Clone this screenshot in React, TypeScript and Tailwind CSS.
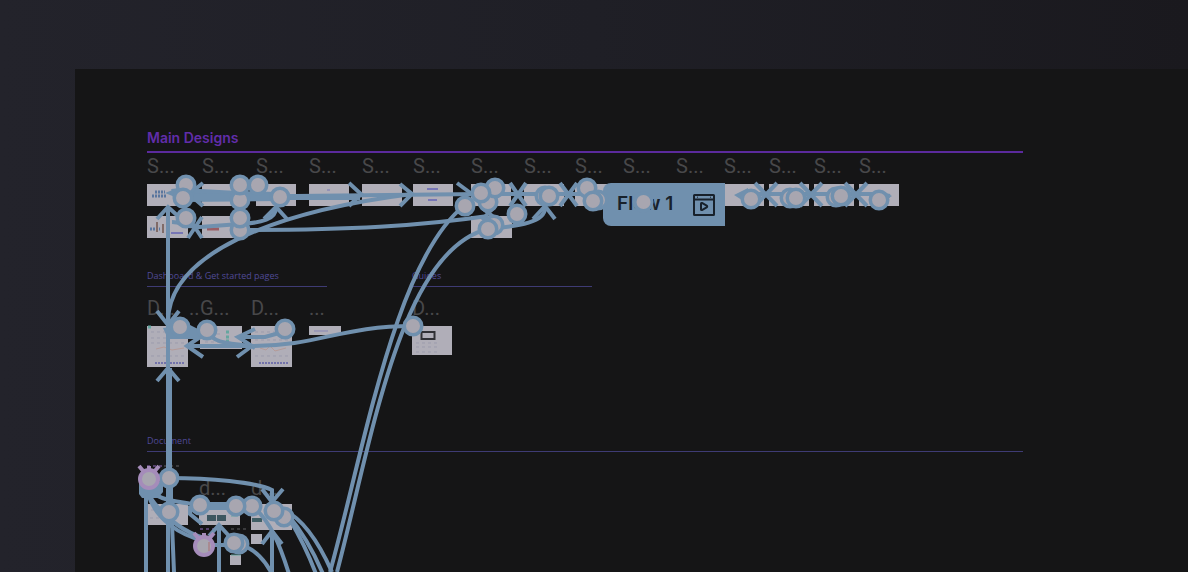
import React from "react";

type Point = [x: number, y: number];

interface FrameItem {
  label?: string;
  slot: string;
  frame?: string;
}

const mainFrames: FrameItem[] = [
  { label: "S...", slot: "w-[55px]", frame: "h-[22px] w-10" },
  { label: "S...", slot: "w-[54px]", frame: "h-[22px] w-10" },
  { label: "S...", slot: "w-[53px]", frame: "h-[22px] w-10" },
  { label: "S...", slot: "w-[53px]", frame: "h-[22px] w-10" },
  { label: "S...", slot: "w-[51px]", frame: "h-[22px] w-10" },
  { label: "S...", slot: "w-[58px]", frame: "h-[22px] w-10" },
  { label: "S...", slot: "w-[53px]", frame: "h-[22px] w-10" },
  { label: "S...", slot: "w-[51px]", frame: "h-[22px] w-10" },
  { label: "S...", slot: "w-[48px]", frame: "h-[22px] w-10" },
  { label: "S...", slot: "w-[53px]", frame: "h-[22px] w-10" },
  { label: "S...", slot: "w-[48px]", frame: "h-[22px] w-10" },
  { label: "S...", slot: "w-[45px]", frame: "h-[22px] w-10" },
  { label: "S...", slot: "w-[45px]", frame: "h-[22px] w-10" },
  { label: "S...", slot: "w-[45px]", frame: "h-[22px] w-10" },
  { label: "S...", slot: "w-[40px]", frame: "h-[22px] w-10" },
];

const dashboardFrames: FrameItem[] = [
  { label: "D...", slot: "w-[42px]", frame: "h-[41px] w-[41px]" },
  { label: "..", slot: "w-[11px]" },
  { label: "G...", slot: "w-[51px]", frame: "h-[23px] w-[42px]" },
  { label: "D...", slot: "w-[58px]", frame: "h-[41px] w-[41px]" },
  { label: "...", slot: "w-[32px]", frame: "h-[9px] w-8" },
];

const guideFrames: FrameItem[] = [
  { label: "D...", slot: "w-[40px]", frame: "h-[29px] w-10" },
];

const connectors = [
  "M168 207 V478",
  "M170 368 V478",
  "M168 322 C168 255 270 212 412 194",
  "M295 196 L480 194",
  "M172 222 C182 222 186 228 200 227 L240 224",
  "M240 230 C350 230 420 226 488 216",
  "M240 224 C262 223 276 219 276 208",
  "M488 229 C520 226 545 222 545 208",
  "M330 572 C364 450 395 260 465 205",
  "M337 572 C372 440 400 250 488 229",
  "M480 194 H600",
  "M740 194 H879 L890 196",
  "M413 326 C340 326 320 346 250 346 H188",
  "M207 330 C212 342 222 343 252 346",
  "M238 337 H265 L290 330",
  "M169 478 C210 478 255 482 272 490 V501",
  "M149 490 C160 501 180 502 200 505",
  "M148 494 C156 520 180 535 204 541",
  "M148 494 C166 522 190 534 204 538",
  "M146 488 V572",
  "M168 478 V572",
  "M171 478 V500 L174 572",
  "M219 526 V572",
  "M204 545 H235",
  "M190 506 V514 L202 524",
  "M272 531 V572",
  "M252 506 C270 520 280 545 289 574",
  "M240 545 C255 548 266 562 272 574",
  "M284 510 C305 520 320 545 332 572",
  "M288 515 C305 535 315 555 323 574",
  "M290 520 C302 540 310 558 316 574",
  "M482 208 L495 218 M495 206 L482 220",
];

const heavyConnectors = [
  "M172 193 C186 190 200 195 280 196",
  "M183 198 L280 197",
  "M168 333 H207",
  "M200 506 H250",
];

const blobs = [
  "M165 193 L180 187 L196 190 L190 203 Z",
  "M139 482 H163 V492 L158 498 H142 L139 494 Z",
  "M734 195 L748 188 V204 Z",
  "M892 196 L880 190 V204 Z",
  "M470 196 L482 186 L504 192 L488 206 Z",
  "M163 328 L188 324 L206 333 V339 H168 Z",
];

const arrowheads = [
  "M203 183 L189 194 L203 206",
  "M188 217 L202 238 M202 217 L188 238",
  "M349 183 L361 194 L349 206",
  "M400 184 L412 194 L400 206",
  "M457 183 L480 200",
  "M157 219 L168 207 L179 217",
  "M264 219 L276 207 L287 219",
  "M533 219 L545 206 L555 219",
  "M510 183 L526 206 M526 183 L510 206",
  "M560 183 L577 206 M577 183 L560 206",
  "M755 183 L777 206 M777 183 L755 206",
  "M800 183 L822 206 M822 183 L800 206",
  "M845 183 L867 206 M867 183 L845 206",
  "M157 311 L168 325 L179 311",
  "M203 335 L187 346 L203 357",
  "M255 329 L238 337 L255 348",
  "M237 357 L252 346",
  "M157 381 L168 368 L179 381",
  "M262 489 L272 502 L283 489",
  "M209 536 L219 525 L230 537",
  "M262 544 L272 531 L282 544",
];

const hotspots: Point[] = [
  [186, 185], [183, 198], [240, 200], [240, 185], [258, 185], [280, 197],
  [186, 218], [240, 230], [240, 218],
  [465, 206], [488, 202], [495, 188], [481, 193], [517, 214], [494, 225], [488, 229],
  [545, 196], [549, 196], [587, 188], [598, 200], [593, 201],
  [751, 199], [790, 198], [796, 198], [836, 197], [841, 196], [879, 200],
  [180, 327], [207, 330], [285, 329], [413, 326],
  [169, 478], [169, 512], [200, 505], [252, 506], [236, 506],
  [284, 517], [274, 511], [239, 544], [234, 543],
];

const looseHotspots: Point[] = [[149, 478], [204, 545]];

function FrameDetails() {
  return (
    <g fill="none">
      <g stroke="#7776b5" strokeWidth="2">
        <path d="M427 189 H438 M428 200 H437 M377 198 H387 M171 233 H183" />
        <path d="M327 190 H330" strokeWidth="1" />
      </g>
      <g stroke="#7373ab" strokeWidth="2" strokeDasharray="2 1">
        <path d="M155 363 H184 M259 363 H288" />
      </g>
      <g stroke="#b59a97" strokeWidth="1">
        <path d="M156 349 L164 347 L172 350 L184 348 M260 348 L266 350 L270 346 L275 351 L286 348" />
      </g>
      <g stroke="#9b9bac" strokeWidth="1" strokeDasharray="3 3">
        <path d="M151 332 H184 M151 338 H184 M151 343 H184 M151 356 H184" />
        <path d="M255 332 H288 M255 340 H288 M255 356 H288 M205 334 H220 M205 342 H222" />
        <path d="M416 343 H440 M416 347 H440 M416 352 H440 M151 510 H180 M150 518 H165" />
      </g>
      <path
        d="M226 332 H231 M226 337 H231 M226 341 H231 M148 327 H153"
        stroke="#65a69f"
        strokeWidth="3"
        strokeDasharray="3 2"
      />
      <rect x="421.500" y="332" width="13" height="7" stroke="#303035" strokeWidth="2" />
      <g stroke="#5a769e" strokeWidth="3" strokeDasharray="2 1">
        <path d="M152 196 H166 M155 192 H165 M150 229 H160" />
      </g>
      <path d="M157 222 V232 M163 224 V233" stroke="#806b68" strokeWidth="2" />
      <path d="M207 229 H219" stroke="#9b5c63" strokeWidth="3" />
      <path d="M207 518 H227" stroke="#3d5660" strokeWidth="6" strokeDasharray="9 1" />
      <path d="M231 516 H238 M231 555 H241" stroke="#65a69f" strokeWidth="1" />
      <path d="M252 520 H262" stroke="#405e65" strokeWidth="4" />
      <path d="M314 331 H328" stroke="#8585b5" strokeWidth="1" />
      <g strokeWidth="2" strokeDasharray="3 3">
        <path d="M147 466 H162 M200 529 H215" stroke="#54406b" />
        <path d="M164 466 H180 M231 529 H246" stroke="#3a3a3c" />
      </g>
    </g>
  );
}

function ConnectorLayer() {
  return (
    <svg
      aria-hidden="true"
      className="pointer-events-none absolute top-0 left-0"
      width="1113"
      height="503"
      viewBox="75 69 1113 503"
    >
      <FrameDetails />
      <g fill="none" stroke="#7090ae" strokeWidth="4">
        {connectors.map((d) => (
          <path key={d} d={d} />
        ))}
        {arrowheads.map((d) => (
          <path key={d} d={d} />
        ))}
        <g strokeWidth="8">
          {heavyConnectors.map((d) => (
            <path key={d} d={d} />
          ))}
        </g>
        <path d="M280 197 H360" strokeWidth="6" />
      </g>
      <g fill="#7090ae">
        {blobs.map((d) => (
          <path key={d} d={d} />
        ))}
      </g>
      <g fill="#a8a6b0" stroke="#7090ae" strokeWidth="3.500">
        {hotspots.map(([x, y]) => (
          <circle key={`${x}-${y}`} cx={x} cy={y} r="8.750" />
        ))}
      </g>
      <circle cx="643" cy="202" r="10.500" fill="#7090ae" />
      <circle cx="643.500" cy="202" r="7" fill="#a8a6b0" />
      {looseHotspots.map(([x, y]) => (
        <g key={`${x}-${y}`} fill="#a8a6b0" stroke="#a58cba" strokeWidth="4">
          <path
            d={`M${x - 5} ${y - 6} L${x - 10} ${y - 12} M${x} ${y - 8} V${y - 12} M${x + 5} ${y - 6} L${x + 10} ${y - 12}`}
          />
          <circle cx={x} cy={y + 1} r="9" />
        </g>
      ))}
      <path d="M209 542 V551" stroke="#a98a91" strokeWidth="2" />
    </svg>
  );
}

function FlowIcon() {
  return (
    <svg aria-hidden="true" width="22" height="22" viewBox="0 0 22 22" fill="none" stroke="#18212b" strokeWidth="2">
      <rect x="1" y="1" width="20" height="20" rx="0.500" />
      <path d="M1 5.500 H21" />
      <path d="M4 3.200 H5 M17 3.200 H18" strokeWidth="1" />
      <path d="M8 9.800 Q8 8.600 9 9 L13.600 11.600 Q14.800 12.500 13.600 13.300 L9 16 Q8 16.400 8 15.200 Z" />
    </svg>
  );
}

function FrameLabel({ children }: { children?: string }) {
  return (
    <span className="block h-6 font-['Roboto',sans-serif] text-xl leading-6 whitespace-nowrap text-[#48484a]">
      {children}
    </span>
  );
}

function FrameRow({ items }: { items: FrameItem[] }) {
  return (
    <ul className="flex items-start">
      {items.map((item, i) => (
        <li key={i} className={`shrink-0 space-y-1.5 ${item.slot}`}>
          <FrameLabel>{item.label}</FrameLabel>
          {item.frame && <div className={`bg-[#b0aeb8] ${item.frame}`} />}
        </li>
      ))}
    </ul>
  );
}

function SectionTitle({ children }: { children: string }) {
  return (
    <h2 className="border-b border-[#3e3b74] pb-1 font-['Open_Sans',sans-serif] text-[9px] leading-3 font-medium whitespace-nowrap text-[#504a96]">
      {children}
    </h2>
  );
}

function MainDesigns() {
  return (
    <section className="h-[143px] w-[876px]">
      <h1 className="mb-px border-b-2 border-[#5b2a9d] pb-0.5 text-sm leading-[22px] font-semibold text-[#612daa]">
        Main Designs
      </h1>
      <FrameRow items={mainFrames} />
      <div className="mt-2.5 flex">
        <div className="mr-3.5 h-[22px] w-[41px] bg-[#b0aeb8]" />
        <div className="h-[22px] w-10 bg-[#b0aeb8]" />
        <div className="ml-[229px] h-[22px] w-[41px] bg-[#b0aeb8]" />
      </div>
    </section>
  );
}

function DocumentSection() {
  return (
    <section className="w-[876px]">
      <SectionTitle>Document</SectionTitle>
      <div className="mt-6 flex items-start">
        <div className="w-[52px] shrink-0 space-y-1">
          <FrameLabel />
          <div className="h-[21px] w-[41px] bg-[#b0aeb8]" />
        </div>
        <div className="w-[52px] shrink-0 space-y-1">
          <FrameLabel>d...</FrameLabel>
          <div className="h-[21px] w-[41px] bg-[#b0aeb8]" />
          <div className="flex h-9 w-[42px] items-end justify-end">
            <div className="h-2.5 w-[11px] bg-[#b0aeb8]" />
          </div>
        </div>
        <div className="w-[52px] shrink-0 space-y-1">
          <FrameLabel>d...</FrameLabel>
          <div className="h-[26px] w-[41px] bg-[#b0aeb8]" />
          <div className="h-2.5 w-[11px] bg-[#b0aeb8]" />
        </div>
      </div>
    </section>
  );
}

export default function App() {
  return (
    <main className="flex h-screen flex-col overflow-hidden bg-[#202027] bg-linear-to-r/srgb from-[#23232b] via-[#1f1f26] to-[#1a191e] pt-[69px] pl-[75px] font-['Inter',sans-serif]">
      <div className="relative min-h-0 flex-1 overflow-hidden bg-[#151516] pt-[58px] pl-[72px]">
        <MainDesigns />
        <div className="flex h-[165px] gap-[85px]">
          <section className="w-[180px] space-y-[9px]">
            <SectionTitle>Dashboard &amp; Get started pages</SectionTitle>
            <FrameRow items={dashboardFrames} />
          </section>
          <section className="w-[180px] space-y-[9px]">
            <SectionTitle>Guides</SectionTitle>
            <FrameRow items={guideFrames} />
          </section>
        </div>
        <DocumentSection />

        <button
          type="button"
          className="absolute top-[114px] left-[528px] flex h-[43px] w-[122px] items-center justify-between rounded-l-lg bg-[#7090ae] pr-2.5 pl-3.5 text-[19px] font-semibold text-[#18212b]"
        >
          Flow 1
          <FlowIcon />
        </button>

        <ConnectorLayer />
      </div>
    </main>
  );
}
